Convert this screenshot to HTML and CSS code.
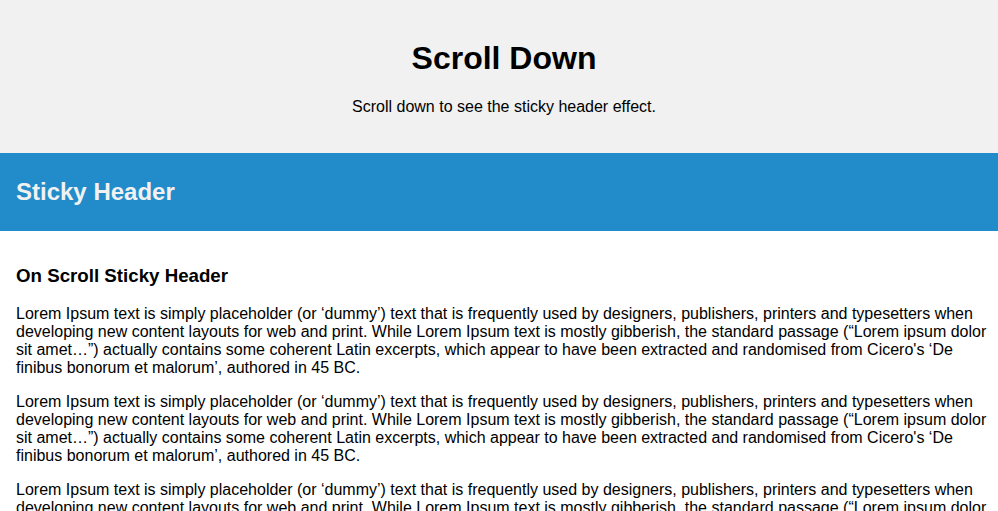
FILE: index.html
```html
<!DOCTYPE html>
<html lang="en">
<head>
<meta charset="utf-8">
<title>Sticky Header</title>
<link rel="stylesheet" href="styles.css">
</head>
<body>
<div class="top-container">
  <h1>Scroll Down</h1>
  <p>Scroll down to see the sticky header effect.</p>
</div>

<div class="header" id="myHeader">
  <h2>Sticky Header</h2>
</div>

<div class="content">
  <h3>On Scroll Sticky Header</h3>
  <p>Lorem Ipsum text is simply placeholder (or ‘dummy’) text that is frequently used by designers, publishers, printers and typesetters when developing new content layouts for web and print. While Lorem Ipsum text is mostly gibberish, the standard passage (“Lorem ipsum dolor sit amet…”) actually contains some coherent Latin excerpts, which appear to have been extracted and randomised from Cicero's ‘De finibus bonorum et malorum’, authored in 45 BC.</p>
  <p>Lorem Ipsum text is simply placeholder (or ‘dummy’) text that is frequently used by designers, publishers, printers and typesetters when developing new content layouts for web and print. While Lorem Ipsum text is mostly gibberish, the standard passage (“Lorem ipsum dolor sit amet…”) actually contains some coherent Latin excerpts, which appear to have been extracted and randomised from Cicero's ‘De finibus bonorum et malorum’, authored in 45 BC.</p>
  <p>Lorem Ipsum text is simply placeholder (or ‘dummy’) text that is frequently used by designers, publishers, printers and typesetters when developing new content layouts for web and print. While Lorem Ipsum text is mostly gibberish, the standard passage (“Lorem ipsum dolor sit amet…”) actually contains some coherent Latin excerpts, which appear to have been extracted and randomised from Cicero's ‘De finibus bonorum et malorum’, authored in 45 BC.</p>
  <p>Lorem Ipsum text is simply placeholder (or ‘dummy’) text that is frequently used by designers, publishers, printers and typesetters when developing new content layouts for web and print. While Lorem Ipsum text is mostly gibberish, the standard passage (“Lorem ipsum dolor sit amet…”) actually contains some coherent Latin excerpts, which appear to have been extracted and randomised from Cicero's ‘De finibus bonorum et malorum’, authored in 45 BC.</p>
</div>
</body>
</html>
```

FILE: styles.css
```css
body {
  margin: 0;
  font-family: "Liberation Sans", Arial, sans-serif;
  color: #000;
  background: #fff;
}

.top-container {
  background-color: #f1f1f1;
  padding: 20px 30px 20px 40px;
  text-align: center;
}

.top-container h1 {
  font-size: 32px;
  margin: 20px 0 21px;
}

.top-container p {
  font-size: 16px;
  margin: 0 0 17px;
}

.header {
  padding: 25px 16px;
  background: #228ccb;
  color: #f1f1f1;
}

.header h2 {
  font-size: 24px;
  margin: 0;
}

.content {
  padding: 16px 7px 16px 16px;
}

.content h3 {
  font-size: 18.72px;
  margin: 18px 0;
}

.content p {
  font-size: 16px;
  margin: 16px 0;
}
```
